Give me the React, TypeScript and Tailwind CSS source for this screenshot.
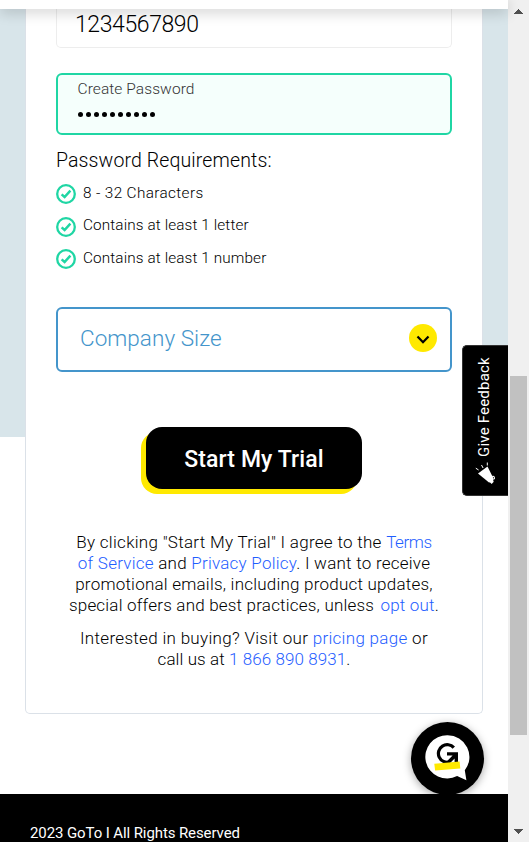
import type { ReactNode } from 'react';

const requirements = ['8 - 32 Characters', 'Contains at least 1 letter', 'Contains at least 1 number'];

function CheckIcon() {
  return (
    <svg width="20" height="20" viewBox="0 0 20 20" fill="none" stroke="#1fd6a4" className="shrink-0">
      <circle cx="10" cy="10" r="8.8" strokeWidth="2.3" />
      <path d="M5.6 10.4 8.6 13l5.8-6.3" strokeWidth="2.5" />
    </svg>
  );
}

function Link({ children }: { children: ReactNode }) {
  return <a href="#" className="text-[#1f5eff]">{children}</a>;
}

function Scrollbar() {
  return (
    <div className="flex h-full w-[21px] shrink-0 flex-col bg-[#f0f0f0] pt-[9px] pb-[9px]">
      <svg width="21" height="5" viewBox="0 0 21 5" fill="#505050" shapeRendering="crispEdges">
        <path d="M6 5 10.5 0 15 5z" />
      </svg>
      <div className="mt-[362px] ml-[2px] h-[359px] w-[17px] bg-[#c1c1c1]" />
      <svg width="21" height="5" viewBox="0 0 21 5" fill="#505050" shapeRendering="crispEdges" className="mt-auto mb-[-1px]">
        <path d="M6 0h9L10.5 5z" />
      </svg>
    </div>
  );
}

function FeedbackTab() {
  return (
    <div className="absolute top-[345px] left-[462px] flex h-[151px] w-[46px] flex-col items-center rounded-l-[5px] border border-r-0 border-[#333] bg-black pt-[11px]">
      <span className="h-[101px] rotate-180 pl-[4px] text-center text-[15px] leading-[18px] tracking-[0.2px] whitespace-nowrap text-white [writing-mode:vertical-rl]">
        Give Feedback
      </span>
      <svg width="22" height="24" viewBox="0 0 22 24" className="mt-[4px]">
        <path d="M3 11.5 12.5 4.5 18.5 16.5 17.5 19.5 14 20.5z" fill="#fff" />
        <path d="m14.5 20 2.2 2 2-2.2-1-3" fill="#fff" />
        <path d="M17 14.5c2.2-1 3.6 1.8 1.4 3" fill="none" stroke="#fff" strokeWidth="1.1" />
        <path d="M.8 6.2 3.6 8M6.5 3l1.6 3M12.3.5v3" stroke="#fff" strokeWidth="1" />
      </svg>
    </div>
  );
}

function ChatButton() {
  return (
    <button className="absolute top-[722px] left-[411px] size-[73px] rounded-full bg-black shadow-[0_2px_8px_rgba(0,0,0,0.35)]">
      <svg width="73" height="73" viewBox="0 0 73 73">
        <path d="M36.5 13.3a21.8 21.6 0 0 1 17.3 34.9l1.6 10-9.3-4.1a21.8 21.6 0 1 1-9.6-40.8z" fill="#fff" />
        <path d="M42.8 25.6A8.8 8.8 0 1 0 38.6 39.9" fill="none" stroke="#000" strokeWidth="3.2" />
        <path d="M36 30.2H47V41.5H43.6V36.4L38.6 41.4 36.2 39 41.6 33.4H36z" />
        <path d="m23.3 41.8 25.3-2.2.7 6.8-25.2 2.2z" fill="#ffe900" />
      </svg>
    </button>
  );
}

export default function App() {
  return (
    <div className="relative flex h-[842px] w-[529px] overflow-hidden bg-white font-['Roboto','Liberation_Sans',sans-serif] text-black">
      <div className="flex h-full w-[508px] flex-col bg-[linear-gradient(#d8e5ea_437px,#fff_437px)]">
        <header className="relative z-10 h-[9px] shrink-0 bg-white shadow-[0_3px_14px_rgba(0,0,0,0.22)]" />
        <main className="mx-[25px] flex h-[705px] shrink-0 flex-col rounded-b-[5px] border border-t-0 border-[#dbe1e8] bg-white px-[30px] font-[350]">
          <div className="flex h-[39px] shrink-0 items-center rounded-b-[5px] border border-t-0 border-[#ededed] pb-[7px] pl-[18px] text-[23px] leading-none tracking-[-0.4px]">
            1234567890
          </div>
          <div className="mt-[25px] h-[62px] shrink-0 rounded-[6px] border-2 border-[#1fd6a4] bg-[#f5fffc] pl-[19.5px]">
            <div className="pt-[4px] text-[15.5px] leading-[20px] tracking-[0.08px] text-[#333]">Create Password</div>
            <div className="mt-[13px] flex h-[5px] gap-[3px]">
              {Array.from({ length: 10 }, (_, i) => <i key={i} className="size-[5px] rounded-full bg-black" />)}
            </div>
          </div>
          <h2 className="mt-[13px] text-[19.5px] leading-[26px] tracking-[0.12px] whitespace-nowrap">Password Requirements:</h2>
          <ul className="mt-[4px]">
            {requirements.map((r, i) => (
              <li key={r} className="flex h-[32.5px] items-center gap-[7px] text-[15.3px] leading-none">
                <CheckIcon />
                <span className={i === 0 ? 'pb-[2px] tracking-[0.37px]' : 'pb-[1.6px] tracking-[0.12px]'}>{r}</span>
              </li>
            ))}
          </ul>
          <div className="mt-[31px] flex h-[65px] shrink-0 items-center justify-between rounded-[6px] border-2 border-[#4495cb] pr-[13px] pl-[22px] text-[22.5px] leading-none tracking-[0.05px] text-[#4495cb]">
            <span className="pb-[2px]">Company Size</span>
            <span className="mb-[3px] flex size-[28px] items-center justify-center rounded-full bg-[#ffe900]">
              <svg width="14" height="10" viewBox="0 0 14 10" fill="none" stroke="#000" strokeWidth="2.2" className="mt-[4px]">
                <path d="m1.5 1.5 5.5 5.7 5.5-5.7" />
              </svg>
            </span>
          </div>
          <button className="mt-[55px] ml-[90px] h-[62px] w-[216px] shrink-0 rounded-[16px] bg-black pt-[3px] text-[23px] leading-none font-medium tracking-[0.1px] text-white shadow-[-5px_5px_0_#ffe900]">
            Start My Trial
          </button>
          <div className="mt-[43.5px] flex flex-col items-center text-[17px] leading-[21px] whitespace-nowrap">
            <p className="flex flex-col items-center">
              <span className="tracking-[0.29px]">By clicking "Start My Trial" I agree to the <span className="tracking-[-0.4px]"><Link>Terms</Link></span></span>
              <span className="tracking-[0.24px]"><Link>of Service</Link> and <Link>Privacy Policy</Link>. I want to receive</span>
              <span className="tracking-[0.22px]">promotional emails, including product updates,</span>
              <span className="tracking-[0.2px]">special offers and best practices, unless <span className="pl-[2px]"><Link>opt out</Link></span>.</span>
            </p>
            <p className="mt-[12px] flex flex-col items-center">
              <span className="tracking-[0.31px]">Interested in buying? Visit our <Link>pricing page</Link> or</span>
              <span className="tracking-[0.08px]">call us at <Link>1 866 890 8931</Link>.</span>
            </p>
          </div>
        </main>
        <footer className="mt-[80px] flex-1 bg-black pt-[30px] pl-[30px] text-[15px] leading-[18px] tracking-[-0.1px] whitespace-nowrap text-white">
          2023 GoTo I All Rights Reserved
        </footer>
      </div>
      <Scrollbar />
      <FeedbackTab />
      <ChatButton />
    </div>
  );
}
